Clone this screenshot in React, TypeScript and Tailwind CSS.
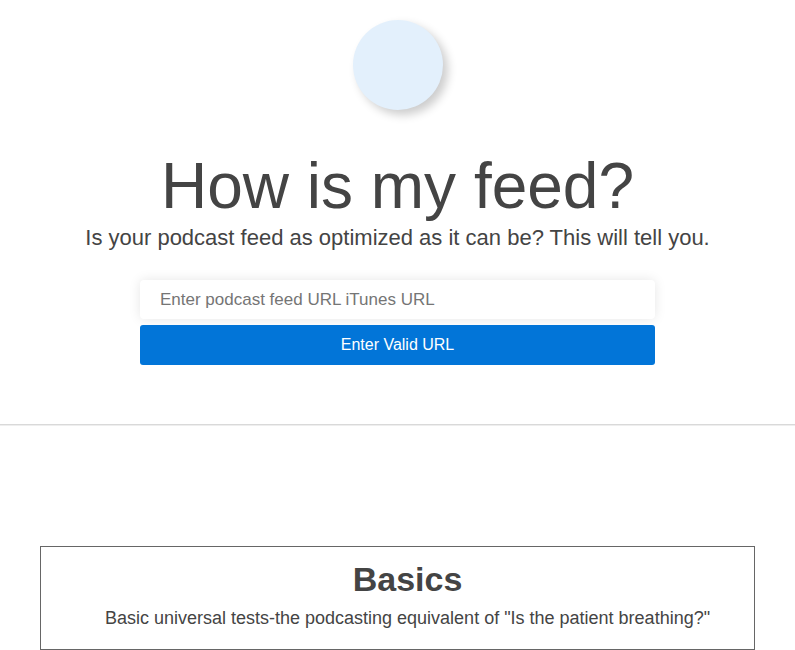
export default function App() {
  return (
    <div className="h-[650px] bg-white text-[#444] overflow-hidden" style={{ fontFamily: '"Liberation Sans", Arial, sans-serif' }}>
      <section className="flex flex-col items-center pt-[20px]">
        <div className="w-[90px] h-[90px] rounded-full bg-[#e3f0fc] shadow-[5px_5px_10px_rgba(0,0,0,0.2)]" />
        <h1 className="mt-[41px] text-[64px] leading-[70px] font-normal text-[#444]">How is my feed?</h1>
        <p className="mt-[4px] text-[22px] leading-[25px] text-[#444]">Is your podcast feed as optimized as it can be? This will tell you.</p>
        <div className="mt-[30px] w-[515px] flex flex-col gap-[6px]">
          <input
            className="h-[39px] w-full rounded-[4px] bg-white px-[20px] text-[17px] text-[#444] placeholder:text-[#757575] shadow-[0_0_12px_rgba(0,0,0,0.1)] outline-none"
            placeholder="Enter podcast feed URL iTunes URL"
          />
          <button className="h-[40px] w-full rounded-[3px] bg-[#0275d8] text-[16px] text-white">Enter Valid URL</button>
        </div>
      </section>
      <div className="mt-[59px] border-t border-[#d9d9d9] border-b border-b-[#eeeeee]" />
      <section className="mt-[120px] mx-[40px] border border-[#666] border-b-0">
        <div className="pl-[20px] pt-[13px] pb-[20px] text-center">
          <h2 className="text-[34px] leading-[38px] font-bold text-[#444]">Basics</h2>
          <p className="mt-[10px] text-[18px] leading-[21px] text-[#444]">Basic universal tests-the podcasting equivalent of "Is the patient breathing?"</p>
        </div>
        <div className="border-t border-[#666] h-[40px]" />
      </section>
    </div>
  );
}
